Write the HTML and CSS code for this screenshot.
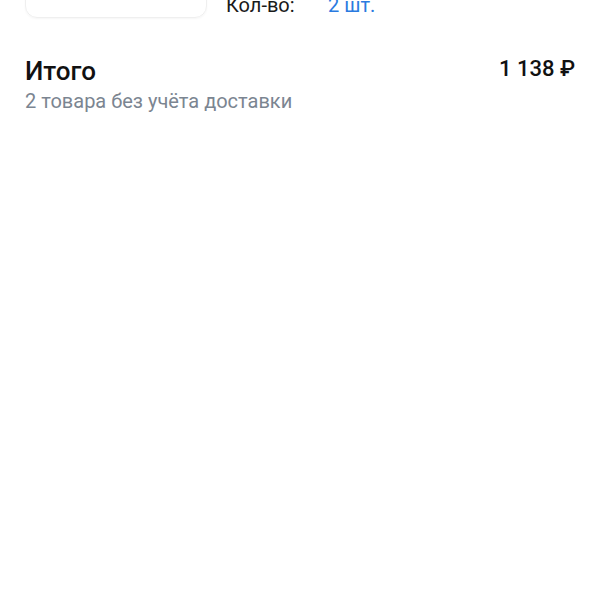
FILE: index.html
```html
<!DOCTYPE html>
<html lang="ru">
<head>
    <meta charset="UTF-8">
    <meta name="viewport" content="width=device-width, initial-scale=1.0">
    <title>Корзина</title>
    <link rel="stylesheet" href="styles.css">
</head>
<body>

    <div class="item">
        <div class="item-photo"></div>
        <div class="item-info">
            <span class="label">Кол-во:</span>
            <span class="qty">2 шт.</span>
        </div>
    </div>

    <div class="total">
        <div class="total-text">
            <div class="total-title">Итого</div>
            <div class="total-note">2 товара без учёта доставки</div>
        </div>
        <div class="total-sum">1 138 ₽</div>
    </div>

</body>
</html>
```

FILE: styles.css
```css
body {
    margin: 0;
    padding: 0 25px;
    background-color: #fff;
    font-family: Roboto, "Noto Sans", sans-serif;
    color: #111;
}

/* --- Cut-off product card at the top --- */
.item {
    display: flex;
    align-items: flex-end;
    margin-top: -60px;
}

.item-photo {
    width: 180px;
    height: 76px;
    border: 1px solid #efefef;
    border-radius: 12px;
    box-shadow: 0 1px 2px rgba(0, 0, 0, 0.04);
}

.item-info {
    display: flex;
    margin-left: 19px;
    font-size: 20px;
    line-height: 24px;
    padding-bottom: 1px;
}

.label {
    color: #1a1a1a;
    width: 102px;
}

.qty {
    color: #2a7ae0;
}

/* --- Total block --- */
.total {
    display: flex;
    justify-content: space-between;
    align-items: flex-start;
    margin-top: 38px;
}

.total-title {
    font-size: 26px;
    font-weight: 500;
    line-height: 30px;
    color: #111;
}

.total-note {
    margin-top: 2px;
    font-size: 20px;
    line-height: 26px;
    color: #7b8591;
}

.total-sum {
    font-size: 22px;
    font-weight: 500;
    line-height: 26px;
}
```
